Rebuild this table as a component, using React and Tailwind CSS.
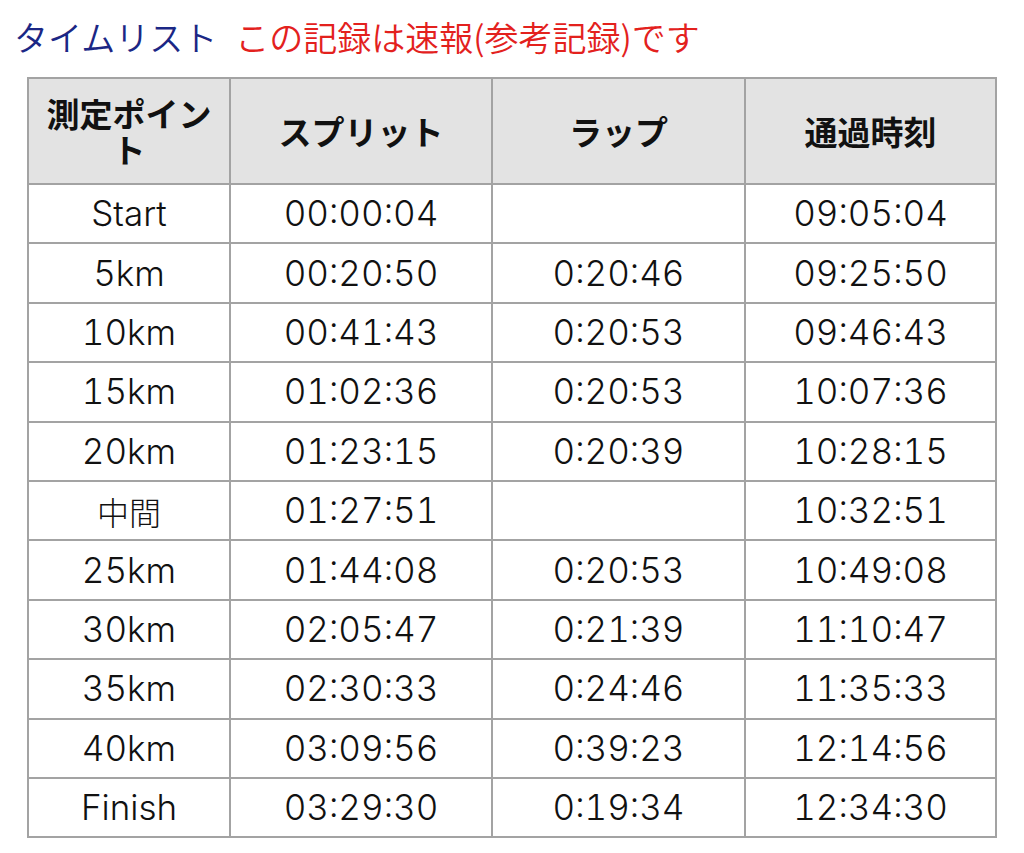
import React from "react";

const rows = [
  ["Start", "00:00:04", "", "09:05:04"],
  ["5km", "00:20:50", "0:20:46", "09:25:50"],
  ["10km", "00:41:43", "0:20:53", "09:46:43"],
  ["15km", "01:02:36", "0:20:53", "10:07:36"],
  ["20km", "01:23:15", "0:20:39", "10:28:15"],
  ["中間", "01:27:51", "", "10:32:51"],
  ["25km", "01:44:08", "0:20:53", "10:49:08"],
  ["30km", "02:05:47", "0:21:39", "11:10:47"],
  ["35km", "02:30:33", "0:24:46", "11:35:33"],
  ["40km", "03:09:56", "0:39:23", "12:14:56"],
  ["Finish", "03:29:30", "0:19:34", "12:34:30"],
];

const headers = ["測定ポイント", "スプリット", "ラップ", "通過時刻"];

export default function App() {
  return (
    <div className="w-[1024px] h-[853px] bg-white overflow-hidden font-['Noto_Sans_CJK_JP',sans-serif]">
      <div className="h-[77px] flex items-center pl-[14px] pb-[4px] text-[34px] leading-none font-[350]">
        <span className="text-[#1b2785]">タイムリスト</span>
        <span className="text-[#e3211d] ml-[18px]">この記録は速報(参考記録)です</span>
      </div>
      <div className="ml-[27px] w-[970px] bg-[#a3a3a3] p-[2px] grid grid-cols-[200px_260px_251px_249px] gap-[2px]">
        {headers.map((h) => (
          <div
            key={h}
            className="bg-[#e3e3e3] h-[104px] flex items-center justify-center text-center px-[14px] text-[33px] font-bold leading-[36px] text-[#111]"
          >
            {h}
          </div>
        ))}
        {rows.map((r, ri) =>
          r.map((c, ci) => (
            <div
              key={ri + "-" + ci}
              className="bg-white h-[57.4px] flex items-center justify-center text-[35px] font-light tabular-nums leading-none text-[#111] font-['Inter','Noto_Sans_CJK_JP',sans-serif]"
            >
              {c === "中間" ? (
                <span className="text-[32px] font-['Noto_Sans_CJK_JP',sans-serif]">{c}</span>
              ) : (
                c
              )}
            </div>
          ))
        )}
      </div>
    </div>
  );
}
